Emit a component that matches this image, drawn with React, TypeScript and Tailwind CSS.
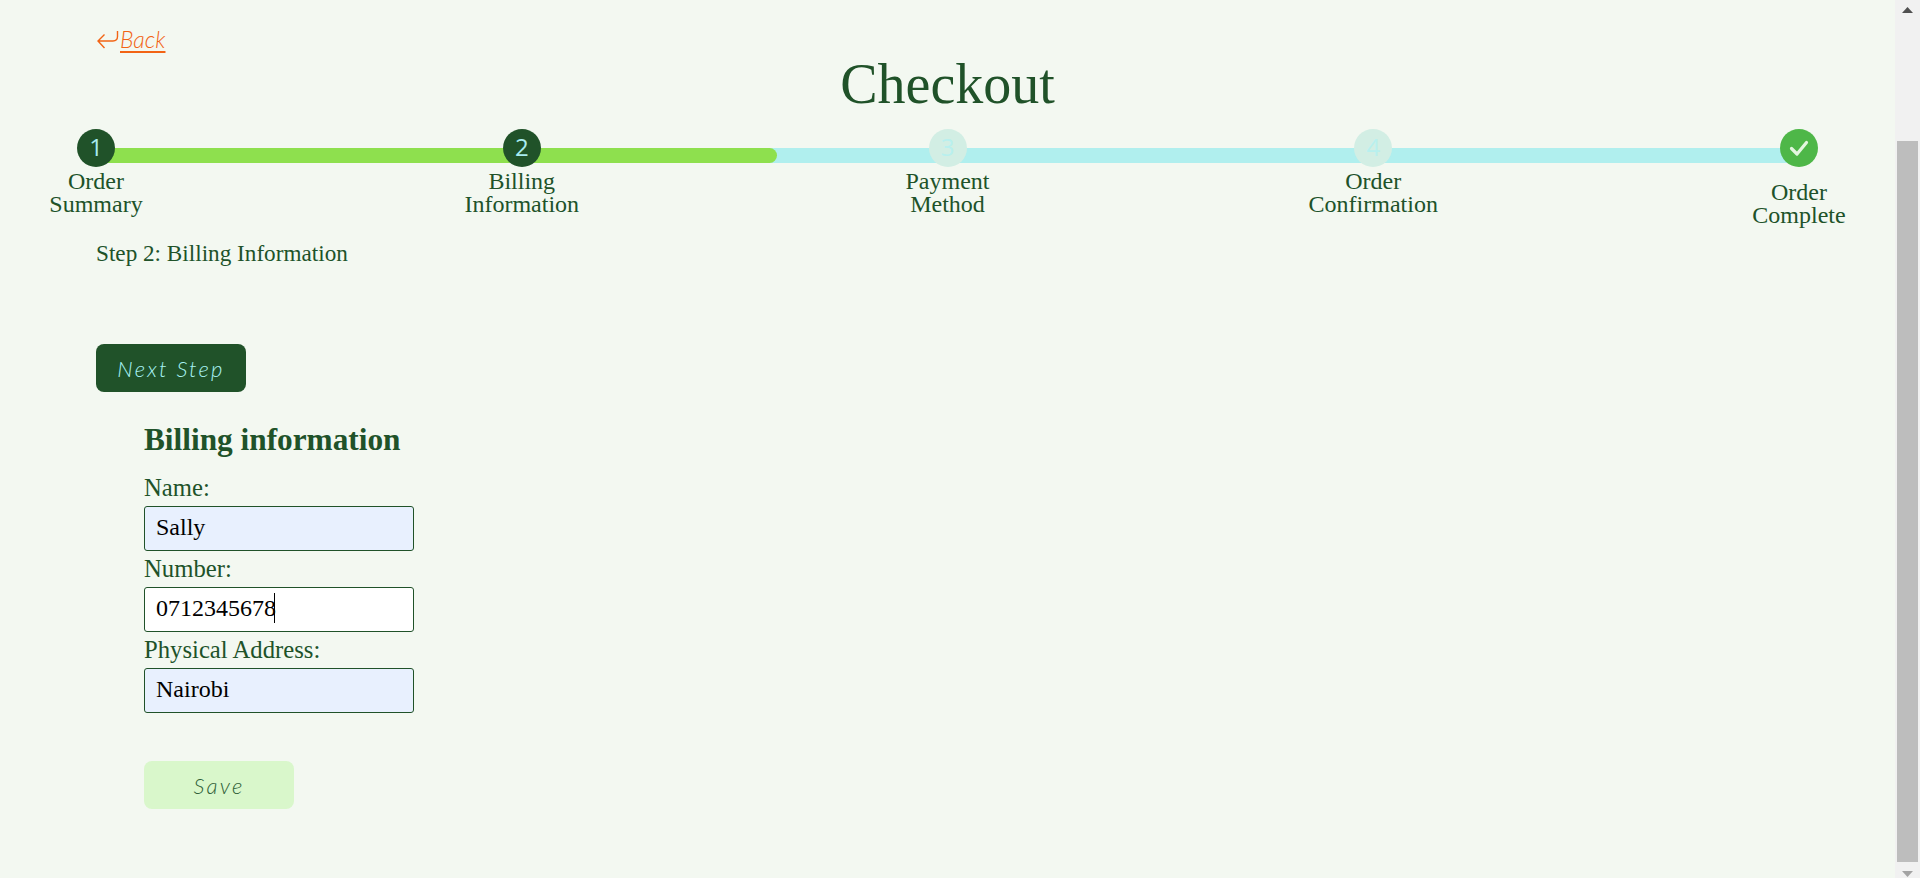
import React from 'react';

const steps = [
  { id: 1, lines: ['Order', 'Summary'], state: 'active' },
  { id: 2, lines: ['Billing', 'Information'], state: 'active' },
  { id: 3, lines: ['Payment', 'Method'], state: 'pending' },
  { id: 4, lines: ['Order', 'Confirmation'], state: 'pending' },
  { id: 5, lines: ['Order', 'Complete'], state: 'done' },
];

const fields = [
  { label: 'Name:', value: 'Sally', autofilled: true },
  { label: 'Number:', value: '0712345678', autofilled: false },
  { label: 'Physical Address:', value: 'Nairobi', autofilled: true },
];

const Step = ({ step }: { step: (typeof steps)[number] }) => (
  <div className="relative flex w-[120px] flex-col items-center">
    {step.state === 'done' ? (
      <div className="mb-[11px] flex h-[38px] w-[38px] items-center justify-center rounded-full bg-[#4eb748]">
        <svg width="24" height="24" viewBox="0 0 24 24" fill="none">
          <path d="M4.5 12.5 L10 18 L19.5 6.5" stroke="#e3f6df" strokeWidth="3.2" strokeLinecap="round" strokeLinejoin="round" />
        </svg>
      </div>
    ) : (
      <div
        className={
          step.state === 'active'
            ? "flex h-[38px] w-[38px] items-center justify-center rounded-full bg-[#205229] font-['Open_Sans'] text-[24px] leading-none text-[#a8ecf0]"
            : "flex h-[38px] w-[38px] items-center justify-center rounded-full bg-[#d2eee4] font-['Open_Sans'] text-[24px] leading-none text-[#b8f0ee]"
        }
      >
        <span className="-mt-[3px]">{step.id}</span>
      </div>
    )}
    <div className="mt-[3px] whitespace-nowrap text-center text-[24px] leading-[23px] text-[#205229]">
      {step.lines.map((line) => (
        <div key={line}>{line}</div>
      ))}
    </div>
  </div>
);

const Scrollbar = () => (
  <aside className="flex h-full w-[25px] shrink-0 flex-col items-center bg-[#f1f1f1]">
    <svg className="mt-[7px] shrink-0" width="11" height="6" viewBox="0 0 11 6">
      <path d="M5.5 0 L11 6 L0 6 Z" fill="#505050" />
    </svg>
    <div className="ml-[-1px] mt-[128px] h-[721px] w-[21px] shrink-0 bg-[#bdbdbd]" />
    <svg className="mt-[9px] shrink-0" width="11" height="6" viewBox="0 0 11 6">
      <path d="M0 0 L11 0 L5.5 6 Z" fill="#a3a3a3" />
    </svg>
  </aside>
);

export default function App() {
  return (
    <div className="flex h-[878px] w-full overflow-hidden bg-[#f3f8f1] font-['Liberation_Serif',serif]">
      <main className="flex-1">
        <a className="ml-[97px] mt-[28px] flex w-fit items-start text-[#f26415]">
          <svg className="mt-[3px] shrink-0" width="22" height="19" viewBox="0 0 22 19" fill="none">
            <path d="M20.5 0 V5.5 Q20.5 10 16 10 H1 M7.5 3.5 L1 10 L7.5 17" stroke="#f26415" strokeWidth="1.4" />
          </svg>
          <span className="ml-[1px] font-['Lato'] text-[23px] font-light italic leading-[23px] underline decoration-[2px] underline-offset-[3px]">
            Back
          </span>
        </a>

        <h1 className="mt-[3px] h-[75px] text-center text-[56px] leading-[60px] text-[#205229]">Checkout</h1>

        <div className="relative flex justify-between px-[36px]">
          <div className="absolute left-[96px] right-[96px] top-[19px] h-[15px] bg-[#b0efee]">
            <div className="h-full w-[40%] rounded-r-full bg-[#8ee04e]" />
          </div>
          {steps.map((step) => (
            <Step key={step.id} step={step} />
          ))}
        </div>

        <p className="ml-[96px] mt-[10px] text-[23.2px] leading-[32px] text-[#205229]">Step 2: Billing Information</p>

        <button className="ml-[96px] mt-[75px] block h-[48px] w-[150px] rounded-[8px] bg-[#205229] font-['Lato'] text-[22px] font-light italic tracking-[2.2px] text-[#a8f2f4]">
          Next Step
        </button>

        <section className="ml-[144px] w-[270px]">
          <h2 className="mt-[30px] text-[31.3px] font-bold leading-[36px] text-[#205229]">Billing information</h2>
          <div className="mt-[12px]">
            {fields.map((field) => (
              <label key={field.label} className="block text-[24.7px] leading-[36px] text-[#205229]">
                {field.label}
                <span className="relative block">
                  <input
                    readOnly
                    value={field.value}
                    className={
                      field.autofilled
                        ? 'block h-[45px] w-[270px] rounded-[3px] border border-[#205229] bg-[#e8f0fe] px-[11px] pb-[2px] text-[24px] text-black outline-none'
                        : 'block h-[45px] w-[270px] rounded-[3px] border border-[#205229] bg-white px-[11px] pb-[2px] text-[24px] text-black outline-none'
                    }
                  />
                  {!field.autofilled && <span className="absolute left-[130px] top-[6px] h-[30px] w-px bg-black" />}
                </span>
              </label>
            ))}
          </div>
          <button className="mt-[48px] block h-[48px] w-[150px] rounded-[8px] bg-[#d9f7cb] font-['Lato'] text-[22px] font-light italic tracking-[2.2px] text-[#2f5f38]">
            Save
          </button>
        </section>
      </main>
      <Scrollbar />
    </div>
  );
}
